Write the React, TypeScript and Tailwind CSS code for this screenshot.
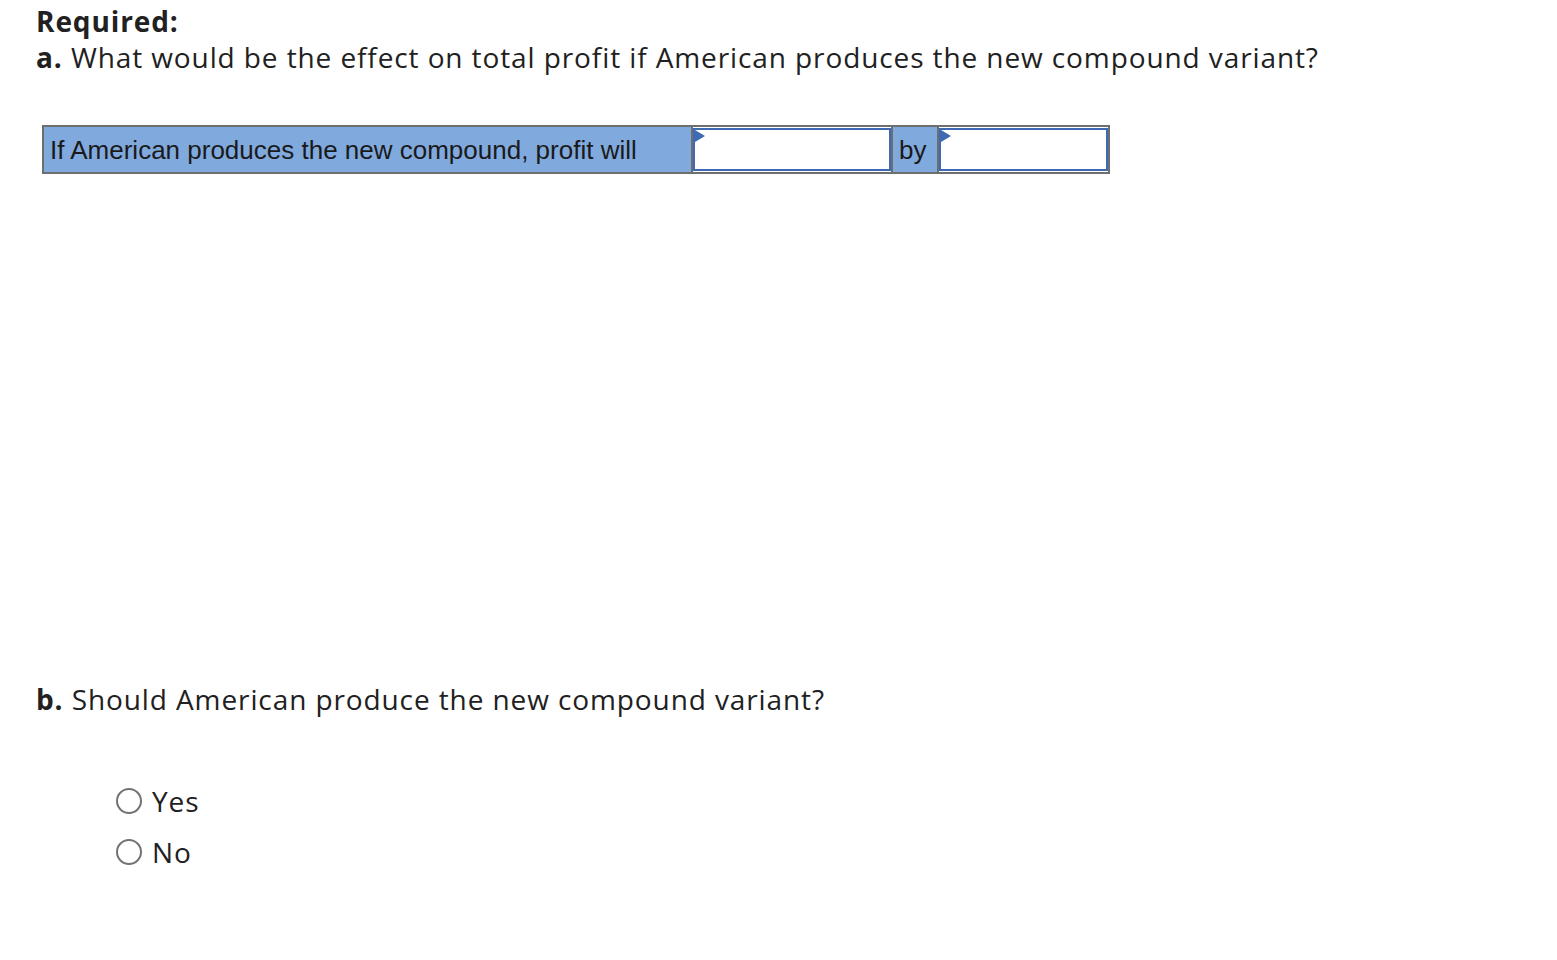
import React from 'react';

function Flag() {
  return <span className="absolute left-0 top-0 w-0 h-0 border-t-[6px] border-b-[6px] border-l-[10px] border-t-transparent border-b-transparent border-l-[#3d6ab3]" />;
}

export default function App() {
  return (
    <div className="w-[1557px] h-[960px] bg-white text-[#212121] font-['Open_Sans',sans-serif] tracking-[0.9px]">
      <div className="pl-[36px] pt-[3px]">
        <div className="text-[28px] leading-[36px] font-bold">Required:</div>
        <div className="text-[28px] leading-[36px]"><span className="font-bold">a.</span> What would be the effect on total profit if American produces the new compound variant?</div>
      </div>

      <div className="pl-[42px] mt-[50px]">
        <table className="border-collapse border-2 border-[#6e6e6e] font-['Liberation_Sans',sans-serif] text-[26px] tracking-normal text-[#1a1a1a]">
          <tbody>
            <tr className="h-[47px]">
              <td className="bg-[#80a9de] border-2 border-[#6e6e6e] w-[649px] px-[6px] align-middle leading-none">If American produces the new compound, profit will</td>
              <td className="border-2 border-[#6e6e6e] w-[200px] p-0">
                <div className="relative h-[43px] border-[2.5px] border-[#3d6ab3] bg-white"><Flag /></div>
              </td>
              <td className="bg-[#80a9de] border-2 border-[#6e6e6e] w-[46px] px-[6px] leading-none">by</td>
              <td className="border-2 border-[#6e6e6e] w-[171px] p-0">
                <div className="relative h-[43px] border-[2.5px] border-[#3d6ab3] bg-white"><Flag /></div>
              </td>
            </tr>
          </tbody>
        </table>
      </div>

      <div className="pl-[36px] mt-[507px] text-[28px] leading-[36px]">
        <span className="font-bold">b.</span> Should American produce the new compound variant?
      </div>

      <div className="pl-[116px] mt-[66px] flex flex-col gap-[15px] text-[28px]">
        {['Yes', 'No'].map(o => (
          <label key={o} className="flex items-center gap-[10px] h-[36px]">
            <span className="w-[26px] h-[26px] rounded-full border-2 border-[#737373] bg-white" />
            <span>{o}</span>
          </label>
        ))}
      </div>
    </div>
  );
}
